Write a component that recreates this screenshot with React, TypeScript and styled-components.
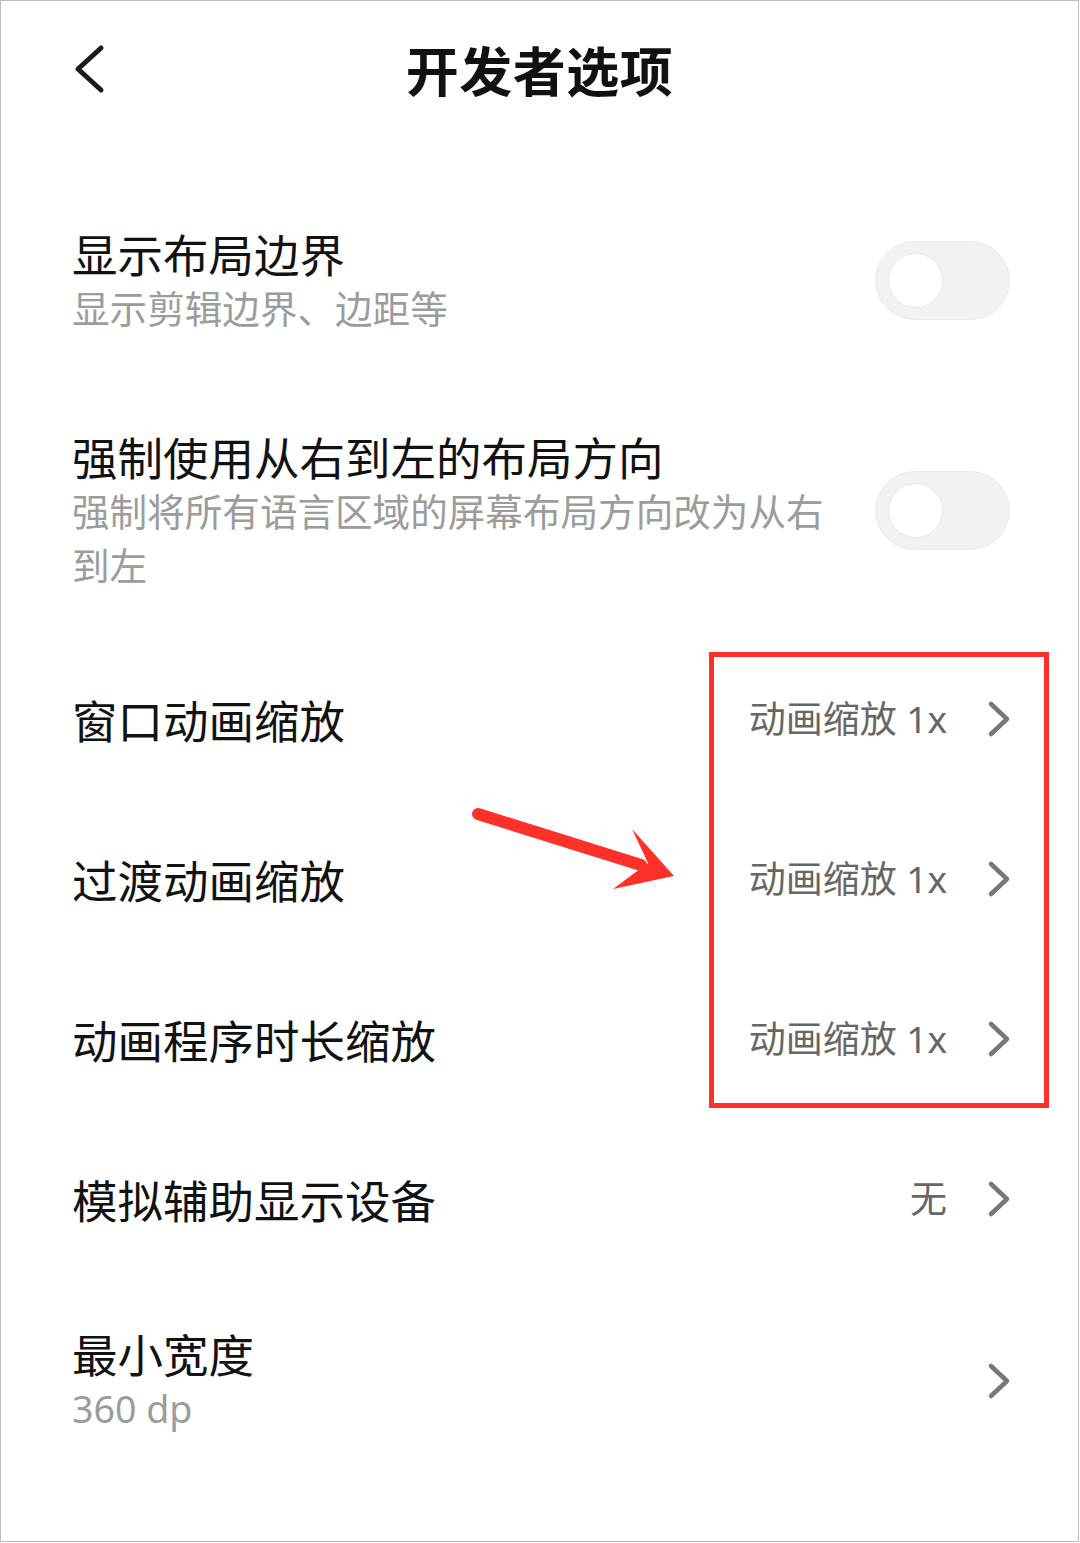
import React from "react";
import styled, { createGlobalStyle } from "styled-components";

const Global = createGlobalStyle`
  html, body { margin: 0; padding: 0; background: #fff; }
  body { font-family: "Noto Sans CJK SC", "Noto Sans", sans-serif; }
  * { box-sizing: border-box; }
`;

const Page = styled.div`
  position: relative;
  width: 1079px;
  height: 1542px;
  border: 1px solid #bdbdbd;
  background: #fff;
  overflow: hidden;
`;

const Header = styled.header`
  height: 136px;
  display: grid;
  grid-template-columns: 1fr auto 1fr;
  align-items: center;
`;

const BackButton = styled.div`
  padding-left: 73px;
  display: flex;
  align-items: center;
  height: 50px;
`;

const Title = styled.h1`
  margin: 0;
  font-size: 53px;
  font-weight: 700;
  color: #111;
  line-height: 64px;
  letter-spacing: 0.5px;
`;

const List = styled.div`
  padding-top: 42px;
  display: flex;
  flex-direction: column;
`;

const Row = styled.div<{ $single?: boolean }>`
  display: flex;
  align-items: center;
  justify-content: space-between;
  padding: ${(p) => (p.$single ? "0" : "46px 0")};
  min-height: ${(p) => (p.$single ? "160px" : "auto")};
  padding-left: 71px;
  padding-right: 66px;
  gap: 40px;
`;

const TextBlock = styled.div`
  flex: 1;
  min-width: 0;
  display: flex;
  flex-direction: column;
`;

const ItemTitle = styled.div`
  font-size: 45.5px;
  line-height: 57px;
  color: #121212;
`;

const ItemSub = styled.div`
  font-family: "Noto Sans", "Noto Sans CJK SC", sans-serif;
  font-size: 37.6px;
  line-height: 54px;
  color: #9c9c9c;
`;

const Right = styled.div`
  display: flex;
  align-items: center;
  gap: 40px;
  flex-shrink: 0;
`;

const Value = styled.span`
  font-family: "Noto Sans", "Noto Sans CJK SC", sans-serif;
  font-size: 37px;
  color: #666;
  line-height: 50px;
`;

const Toggle = styled.div`
  width: 135px;
  height: 79px;
  border-radius: 40px;
  background: #f2f2f2;
  border: 1px solid #ebebeb;
  display: flex;
  align-items: center;
  padding-left: 12px;
  flex-shrink: 0;
  margin-right: 2px;
`;

const Knob = styled.div`
  width: 55px;
  height: 55px;
  border-radius: 50%;
  background: #fff;
  border: 1px solid #e9e9e9;
`;

const Highlight = styled.div`
  position: absolute;
  left: 708px;
  top: 651px;
  width: 340px;
  height: 456px;
  border: 5px solid #ff2f2a;
  pointer-events: none;
`;

const ArrowLayer = styled.svg`
  position: absolute;
  left: 460px;
  top: 790px;
  pointer-events: none;
`;

const Chevron = () => (
  <svg width="25" height="38" viewBox="0 0 25 38">
    <polyline
      points="4,4 20,19 4,34"
      fill="none"
      stroke="#777"
      strokeWidth="4.5"
      strokeLinecap="round"
      strokeLinejoin="round"
    />
  </svg>
);

const BackIcon = () => (
  <svg width="34" height="50" viewBox="0 0 34 50">
    <polyline
      points="27,4 4,25 27,46"
      fill="none"
      stroke="#1a1a1a"
      strokeWidth="5"
      strokeLinecap="round"
      strokeLinejoin="round"
    />
  </svg>
);

const Switch = () => (
  <Toggle>
    <Knob />
  </Toggle>
);

type Item =
  | { kind: "toggle"; title: string; sub: string }
  | { kind: "value"; title: string; value: string }
  | { kind: "link"; title: string; sub: string };

const items: Item[] = [
  { kind: "toggle", title: "显示布局边界", sub: "显示剪辑边界、边距等" },
  {
    kind: "toggle",
    title: "强制使用从右到左的布局方向",
    sub: "强制将所有语言区域的屏幕布局方向改为从右到左",
  },
  { kind: "value", title: "窗口动画缩放", value: "动画缩放 1x" },
  { kind: "value", title: "过渡动画缩放", value: "动画缩放 1x" },
  { kind: "value", title: "动画程序时长缩放", value: "动画缩放 1x" },
  { kind: "value", title: "模拟辅助显示设备", value: "无" },
  { kind: "link", title: "最小宽度", sub: "360 dp" },
];

export default function App() {
  return (
    <>
      <Global />
      <Page>
        <Header>
          <BackButton>
            <BackIcon />
          </BackButton>
          <Title>开发者选项</Title>
          <div />
        </Header>
        <List>
          {items.map((it, i) => {
            if (it.kind === "value") {
              return (
                <Row key={i} $single>
                  <TextBlock>
                    <ItemTitle>{it.title}</ItemTitle>
                  </TextBlock>
                  <Right>
                    <Value>{it.value}</Value>
                    <Chevron />
                  </Right>
                </Row>
              );
            }
            return (
              <Row key={i}>
                <TextBlock>
                  <ItemTitle>{it.title}</ItemTitle>
                  <ItemSub>{it.sub}</ItemSub>
                </TextBlock>
                {it.kind === "toggle" ? (
                  <Switch />
                ) : (
                  <Right>
                    <Chevron />
                  </Right>
                )}
              </Row>
            );
          })}
        </List>
        <Highlight />
        <ArrowLayer width="240" height="120" viewBox="0 0 240 120">
          <line
            x1="17"
            y1="23"
            x2="180"
            y2="74"
            stroke="#ff2f2a"
            strokeWidth="12"
            strokeLinecap="round"
          />
          <polygon points="171,38 213,85 152,98 187,72" fill="#ff2f2a" />
        </ArrowLayer>
      </Page>
    </>
  );
}
